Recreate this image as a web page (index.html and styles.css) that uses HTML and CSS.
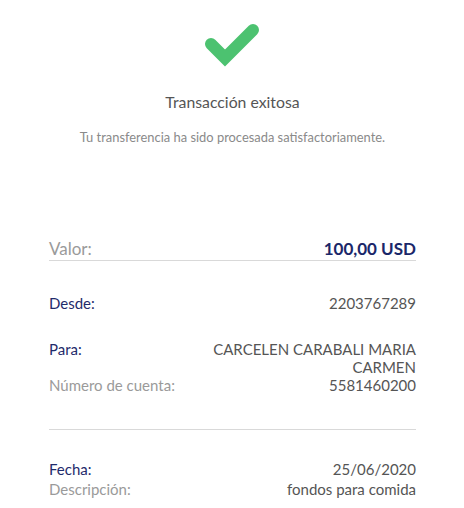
FILE: index.html
```html
<!DOCTYPE html>
<html lang="es">
<head>
<meta charset="utf-8">
<link rel="stylesheet" href="styles.css">
</head>
<body>
<div class="page">
  <header class="hero">
    <svg class="check" width="60" height="46" viewBox="0 0 60 46">
      <path d="M9 23 L23 37 L51 9" fill="none" stroke="#4cc270" stroke-width="12" stroke-linecap="round" stroke-linejoin="miter"/>
    </svg>
    <h1 class="title">Transacción exitosa</h1>
    <p class="subtitle">Tu transferencia ha sido procesada satisfactoriamente.</p>
  </header>

  <section class="details">
    <div class="row row-amount">
      <span class="label muted">Valor:</span>
      <span class="value amount">100,00 USD</span>
    </div>

    <div class="group group-from">
      <div class="row">
        <span class="label navy">Desde:</span>
        <span class="value">2203767289</span>
      </div>
    </div>

    <div class="group group-to">
      <div class="row">
        <span class="label navy">Para:</span>
        <span class="value">CARCELEN CARABALI MARIA<br>CARMEN</span>
      </div>
      <div class="row">
        <span class="label muted">Número de cuenta:</span>
        <span class="value">5581460200</span>
      </div>
    </div>

    <div class="group group-date">
      <div class="row">
        <span class="label navy">Fecha:</span>
        <span class="value">25/06/2020</span>
      </div>
      <div class="row">
        <span class="label muted">Descripción:</span>
        <span class="value">fondos para comida</span>
      </div>
    </div>
  </section>
</div>
</body>
</html>
```
FILE: styles.css
```css
* { box-sizing: border-box; }
html, body { margin: 0; padding: 0; background: #fff; }
body {
  font-family: Lato, "Open Sans", sans-serif;
  color: #555;
  width: 464px;
  height: 508px;
  overflow: hidden;
}
.page { padding: 0 48px 0 49px; }
.hero {
  display: flex;
  flex-direction: column;
  align-items: center;
  padding-top: 21px;
}
.check { display: block; margin-left: -1px; }
.title {
  margin: 25px 0 0;
  font-size: 15.8px;
  font-weight: 400;
  color: #555;
  line-height: 20px;
}
.subtitle {
  margin: 17px 0 0;
  font-size: 12.9px;
  color: #8a8a8a;
  line-height: 16px;
}
.details { margin-top: 93px; }
.row {
  display: flex;
  justify-content: space-between;
  align-items: flex-start;
  font-size: 15px;
  line-height: 20px;
}
.label { white-space: nowrap; }
.value { text-align: right; color: #555; }
.navy { color: #1f2b6b; }
.muted { color: #9a9a9a; }
.row-amount {
  border-bottom: 1px solid #d9d9d9;
  font-size: 17px;
  line-height: 22px;
}
.amount { color: #1a2769; font-weight: 700; }
.group-from { padding-top: 32px; }
.group-to { padding-top: 27px; border-bottom: 1px solid #d9d9d9; padding-bottom: 35px; }
.group-to .row { line-height: 18px; }
.group-date { padding-top: 29px; }
```
